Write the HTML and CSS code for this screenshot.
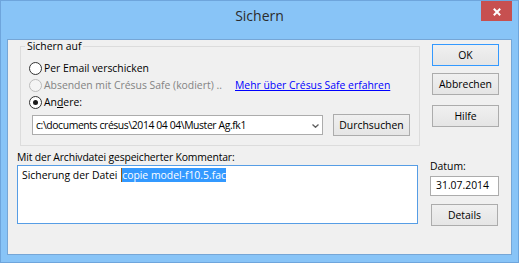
FILE: index.html
```html
<!DOCTYPE html>
<html lang="de">
<head>
<meta charset="utf-8">
<title>Sichern</title>
<link rel="stylesheet" href="styles.css">
</head>
<body>
<div class="window">
  <div class="titlebar">
    <div class="title">Sichern</div>
    <div class="close">
      <svg width="8" height="8" viewBox="0 0 8 8"><path d="M0.8 0.8 L7.2 7.2 M7.2 0.8 L0.8 7.2" stroke="#fff" stroke-width="2" fill="none"/></svg>
    </div>
  </div>
  <div class="client">
    <div class="left">
      <fieldset class="group">
        <legend>Sichern auf</legend>
        <div class="radio-row"><span class="radio"></span><span>Per Email verschicken</span></div>
        <div class="radio-row disabled"><span class="radio"></span><span class="safe-label">Absenden mit Crésus Safe (kodiert) ..</span><span class="link">Mehr über Crésus Safe erfahren</span></div>
        <div class="radio-row"><span class="radio checked"></span><span>An<u>d</u>ere:</span></div>
        <div class="path-row">
          <div class="combo"><span class="combo-text">c:\documents crésus\2014 04 04\Muster Ag.fk1</span><svg class="chev" width="7" height="4" viewBox="0 0 7 4"><path d="M0.5 0.5 L3.5 3.3 L6.5 0.5" stroke="#606060" stroke-width="1.3" fill="none"/></svg></div>
          <div class="btn browse">Durchsuchen</div>
        </div>
      </fieldset>
      <div class="comment-label">Mit der Archivdatei gespeicherter Kommentar:</div>
      <div class="textarea">Sicherung der Datei <span class="sel">copie model-f10.5.fac</span></div>
    </div>
    <div class="right">
      <div class="btn ok">OK</div>
      <div class="btn cancel">Abbrechen</div>
      <div class="btn help">Hilfe</div>
      <div class="date-label">Datum:</div>
      <div class="datebox">31.07.2014</div>
      <div class="btn details">Details</div>
    </div>
  </div>
</div>
</body>
</html>
```
FILE: styles.css
```css
* { box-sizing: border-box; }
html, body { margin: 0; padding: 0; background: #ffffff; }
body {
  font-family: "Open Sans", "Noto Sans", sans-serif;
  font-size: 10.4px;
  line-height: 13px;
  color: #000;
}
.window {
  width: 519px;
  height: 263px;
  border: 1px solid #6ea5dc;
  background: #88c4f7;
  display: flex;
  flex-direction: column;
}
.titlebar {
  height: 38px;
  flex: none;
  display: grid;
  grid-template-columns: 1fr auto 1fr;
  align-items: start;
}
.title {
  grid-column: 2;
  font-size: 14px;
  line-height: 19px;
  padding-top: 5px;
  color: #2b2b2b;
}
.close {
  grid-column: 3;
  justify-self: end;
  margin-right: 6px;
  width: 31px;
  height: 20px;
  background: #c75050;
  display: flex;
  align-items: center;
  justify-content: center;
}
.close svg { margin-top: 1px; }
.client {
  margin: 0 6px;
  height: 216px;
  flex: none;
  border: 1px solid #76a6d6;
  background: #f0f0f0;
  display: grid;
  grid-template-columns: 412px 1fr;
}
.left { display: flex; flex-direction: column; align-items: flex-start; }
.group {
  margin: 0 0 0 12px;
  width: 400px;
  border: 1px solid #dcdcdc;
  padding: 7px 0 9px 0;
  min-width: 0;
}
.group legend {
  margin-left: 4px;
  padding: 0 2px;
  line-height: 13px;
}
.radio-row {
  height: 17px;
  display: flex;
  align-items: center;
  padding-left: 8px;
  white-space: nowrap;
}
.radio {
  width: 13px;
  height: 13px;
  border-radius: 50%;
  border: 1px solid #333;
  background: #fff;
  margin-right: 2px;
  flex: none;
  display: flex;
  align-items: center;
  justify-content: center;
}
.radio.checked::after {
  content: "";
  width: 5px;
  height: 5px;
  border-radius: 50%;
  background: #1a1a1a;
}
.disabled { color: #838383; }
.disabled .radio { border-color: #bcbcbc; background: #f4f4f4; }
.safe-label { width: 191px; flex: none; }
.link { color: #0000ff; text-decoration: underline; }
.path-row {
  display: flex;
  align-items: center;
  height: 22px;
  margin-top: 3px;
  padding-left: 11px;
  gap: 10px;
}
.combo {
  width: 291px;
  height: 20px;
  border: 1px solid #acacac;
  background: #fff;
  display: flex;
  align-items: center;
  padding: 0 3px 0 3px;
  white-space: nowrap;
}
.combo-text { flex: 1; letter-spacing: -0.4px; }
.chev { margin-top: 2px; }
.btn {
  height: 22px;
  border: 1px solid #acacac;
  background: linear-gradient(#f0f0f0, #e5e5e5);
  display: flex;
  align-items: center;
  justify-content: center;
  white-space: nowrap;
}
.browse { width: 77px; }
.comment-label { margin: 5px 0 0 9px; letter-spacing: -0.15px; }
.textarea {
  margin: 1px 0 0 9px;
  width: 401px;
  height: 59px;
  border: 1px solid #569de5;
  background: #fff;
  padding: 3px 4px;
  line-height: 12px;
  white-space: nowrap;
}
.sel {
  background: #3399ff;
  color: #fff;
  border-left: 1px solid #9a5a10;
  margin-left: 1px;
}
.right { display: flex; flex-direction: column; align-items: flex-start; }
.ok { margin: 4px 0 0 12px; width: 67px; border-color: #3399ff; }
.cancel { margin: 7px 0 0 12px; width: 67px; }
.help { margin: 10px 0 0 12px; width: 67px; }
.date-label { margin: 33px 0 0 10px; }
.datebox {
  margin: 3px 0 0 10px;
  width: 69px;
  height: 20px;
  border: 1px solid #acacac;
  background: #fff;
  padding: 0 0 0 5px;
  line-height: 16px;
}
.details { margin: 8px 0 0 11px; width: 67px; }
```
